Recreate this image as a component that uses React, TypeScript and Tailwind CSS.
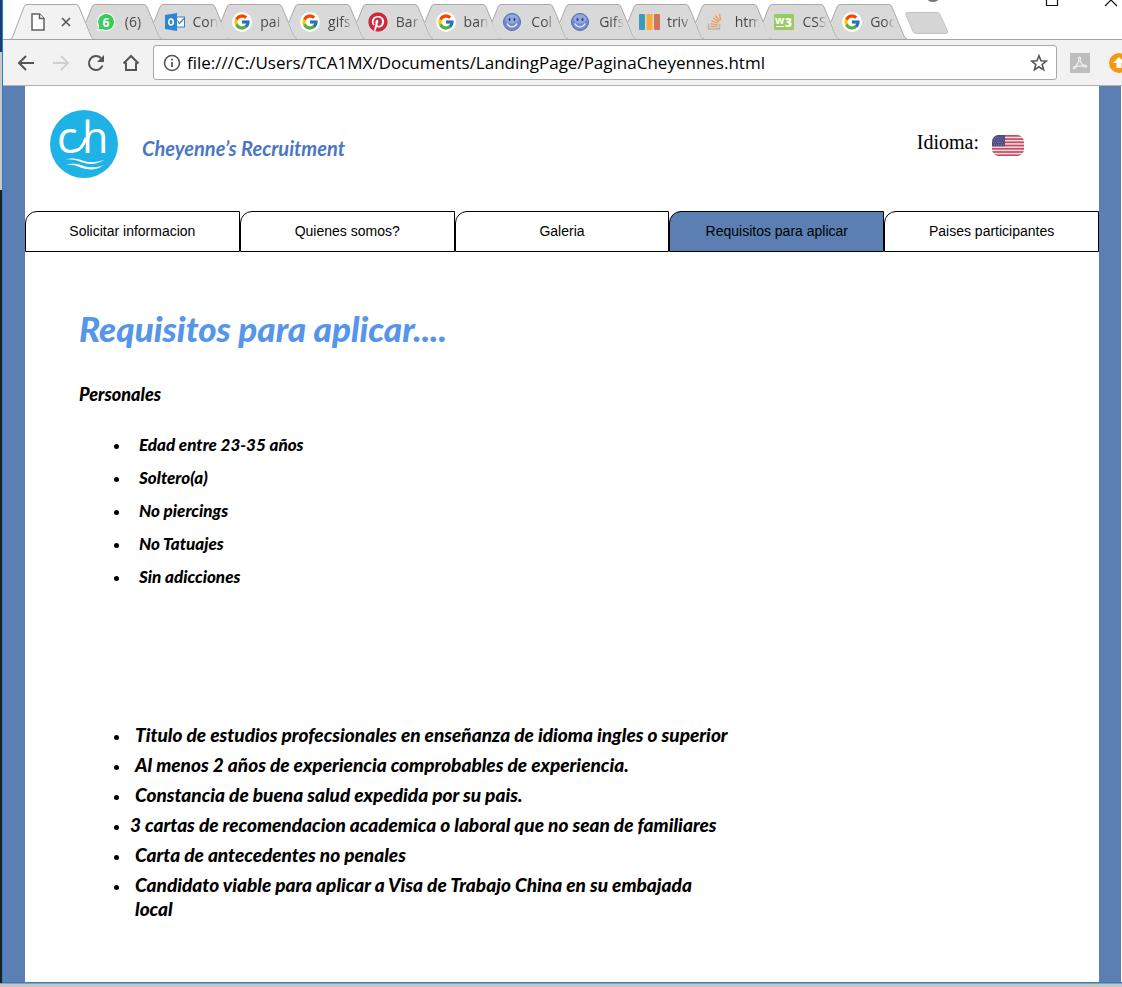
import React from "react";
import { FcGoogle } from "react-icons/fc";
import { FaPinterest } from "react-icons/fa";

const OUTLINE = "#a9a9a9";

function GoogleIcon() {
  return (
    <span className="flex size-5 items-center justify-center rounded-full bg-white">
      <FcGoogle className="size-[18px]" />
    </span>
  );
}

function WhatsAppIcon() {
  return (
    <svg viewBox="0 0 18 18" className="size-[18px]">
      <path d="M9 0a9 9 0 1 1-4 17L0 18l1.200-4.500A9 9 0 0 1 9 0Z" fill="#fff" />
      <path d="M9 1a8 8 0 1 1-3.800 15L1.400 16.600l.9-3.500A8 8 0 0 1 9 1Z" fill="#3acb5d" />
      <text x="9" y="13.500" textAnchor="middle" fontSize="12" fontWeight="700" fill="#fff" fontFamily="Open Sans, sans-serif">
        6
      </text>
    </svg>
  );
}

function OutlookIcon() {
  return (
    <svg viewBox="0 0 20 18" className="h-[18px] w-5">
      <rect x="9" y="4" width="10.500" height="10" fill="#fff" stroke="#2f86d0" />
      <path d="M10 5.500l4.500 4 5-4.500M13 9l1.500 2L19 6" fill="none" stroke="#2f86d0" />
      <path d="M0 2l12-2v18L0 16Z" fill="#2f86d0" />
      <ellipse cx="6" cy="9" rx="2.200" ry="3" fill="none" stroke="#fff" strokeWidth="1.600" />
    </svg>
  );
}

function PinterestIcon() {
  return (
    <span className="flex size-5 items-center justify-center rounded-full bg-white">
      <FaPinterest className="size-5 text-[#cb2a3c]" />
    </span>
  );
}

function SmileyIcon() {
  return (
    <svg viewBox="0 0 18 18" className="size-[18px]">
      <circle cx="9" cy="9" r="8.500" fill="#7289cf" stroke="#5a6ca8" />
      <ellipse cx="9" cy="6" rx="6.500" ry="4.500" fill="#93a8e2" />
      <ellipse cx="6.500" cy="6.500" rx="1" ry="1.700" fill="#34457c" />
      <ellipse cx="11.500" cy="6.500" rx="1" ry="1.700" fill="#34457c" />
      <path d="M4 10.500c2 4.500 8 4.500 10 0" fill="none" stroke="#e8eefc" strokeWidth="1.400" />
    </svg>
  );
}

function BarsIcon() {
  return (
    <svg viewBox="0 0 21 16" className="h-4 w-[21px]">
      <rect width="6" height="16" rx="1" fill="#389cba" />
      <rect x="7.500" width="6" height="16" fill="#fbab34" />
      <rect x="15" width="6" height="16" rx="1" fill="#d0735c" />
    </svg>
  );
}

function StackIcon() {
  return (
    <svg viewBox="0 0 16 17" className="h-[17px] w-4">
      <path d="M1.500 10.500v5.500h11v-5.500" fill="none" stroke="#b5b5b5" strokeWidth="1.500" />
      <path
        d="M3.500 13.500h7M3.700 10.800l7 .9M4.400 7.800l6.600 2.200M6 4.800l5.700 4M8.500 2.500l4.200 5.500M12.500 .8l1.200 6.500"
        stroke="#f49a56"
        strokeWidth="1.300"
      />
    </svg>
  );
}

function W3Icon() {
  return (
    <svg viewBox="0 0 20 16" className="h-4 w-5">
      <rect width="20" height="16" rx="1" fill="#98cc63" />
      <text x="1" y="10" fontSize="11" fontWeight="700" fill="#fff" fontFamily="Open Sans, sans-serif">w</text>
      <text x="11" y="12.500" fontSize="12" fontWeight="800" fill="#fff" fontFamily="Open Sans, sans-serif">3</text>
      <path d="M2 12.500h8" stroke="#fff" />
    </svg>
  );
}

const tabs = [
  { label: "(6)", icon: <WhatsAppIcon /> },
  { label: "Con", icon: <OutlookIcon /> },
  { label: "pai", icon: <GoogleIcon /> },
  { label: "gifs", icon: <GoogleIcon /> },
  { label: "Bar", icon: <PinterestIcon /> },
  { label: "ban", icon: <GoogleIcon /> },
  { label: "Col", icon: <SmileyIcon /> },
  { label: "Gifs", icon: <SmileyIcon /> },
  { label: "triv", icon: <BarsIcon /> },
  { label: "htm", icon: <StackIcon /> },
  { label: "CSS", icon: <W3Icon /> },
  { label: "Goo", icon: <GoogleIcon /> },
];

function TabStrip() {
  return (
    <div className="flex h-10 items-end overflow-hidden border-b border-[#a3a3a3] bg-white pl-[6px]">
      <ul className="flex w-[881px] shrink-0">
        <li className="relative h-[35px] min-w-0 flex-1">
          <svg viewBox="0 0 86 36" className="absolute top-0 left-0 z-10 h-9 w-[86px]">
            <path d="M0 36C3 35 3 34 4 32L15 3Q16 .5 18 .5H67Q69 .5 70 3L82 32Q83 35 86 36Z" fill="#f2f2f2" />
            <path d="M0 35.500C3 35 3 34 4 32L15 3Q16 .5 18 .5H67Q69 .5 70 3L82 32Q83 35 86 35.500" fill="none" stroke={OUTLINE} />
          </svg>
          <div className="relative z-20 flex h-full items-center gap-4 pl-[22px]">
            <svg viewBox="0 0 14 18" className="h-[18px] w-[14px] shrink-0" fill="#fff" stroke="#5f6063" strokeWidth="1.500">
              <path d="M1 1h7.500L13 5.500V17H1Z" />
              <path d="M8.500 1v4.500H13" />
            </svg>
            <button type="button" aria-label="Cerrar" className="flex size-[10px] shrink-0 items-center justify-center">
              <svg viewBox="0 0 10 10" className="size-[10px]" stroke="#5a5a5a" strokeWidth="1.700">
                <path d="M1 1l8 8M9 1L1 9" />
              </svg>
            </button>
          </div>
        </li>
        {tabs.map((t, i) => (
          <li key={i} className="relative h-[35px] min-w-0 flex-1">
            <svg viewBox="0 0 86 36" className="absolute top-0 left-0 h-9 w-[86px]">
              <path d="M9 18L15 3Q16 .5 18 .5H67Q69 .5 70 3L82 32Q83 34 85 35H18L14 32Z" fill="#d9d9d9" />
              <path d="M9 18L15 3Q16 .5 18 .5H67Q69 .5 70 3L82 32Q83 34 85 35" fill="none" stroke={OUTLINE} />
            </svg>
            <a href="#" className="relative flex h-full items-center pl-[20px]">
              <span className="flex w-7 shrink-0 items-center">{t.icon}</span>
              <span className="w-8 shrink-0 bg-linear-to-r from-[#444] from-[14px] to-[#d9d9d9] to-[25px] bg-clip-text text-[14px] leading-5 whitespace-nowrap text-transparent">
                {t.label}
              </span>
            </a>
          </li>
        ))}
      </ul>
      <button type="button" aria-label="Pestaña nueva" className="mr-[-30px] mb-[5px] ml-[15px] shrink-0">
        <svg viewBox="0 0 44 22" className="h-[22px] w-11">
          <path d="M2 .5H32Q34 .5 35 2.500L42.500 19Q43 21.500 41 21.500H12Q9 21.500 8 19.500L1 3Q0 .5 2 .5Z" fill="#d5d5d5" stroke="#c4c4c4" />
        </svg>
      </button>
      <svg viewBox="0 0 194 9" className="ml-auto h-[9px] w-[194px] shrink-0 self-start" fill="none" stroke="#111" strokeWidth="1.200">
        <ellipse cx="5" cy="-2" rx="6" ry="4" fill="#777" stroke="none" />
        <path d="M118.500-5V5.500H129.500V-5" />
        <path d="M177 6L189-6M189 6L177-6" />
      </svg>
    </div>
  );
}

const toolButton = "flex h-8 w-[35px] shrink-0 items-center justify-center";

function Toolbar() {
  return (
    <div className="flex h-[46px] items-center overflow-hidden border-b border-[#b0b0b0] bg-[#f2f2f2] pl-[5px]">
      <button type="button" aria-label="Atrás" className={toolButton}>
        <svg viewBox="0 0 18 16" className="h-4 w-[18px]" fill="none" stroke="#555" strokeWidth="2">
          <path d="M17 8H2M9 1L2 8l7 7" />
        </svg>
      </button>
      <button type="button" aria-label="Adelante" className={toolButton}>
        <svg viewBox="0 0 18 16" className="h-4 w-[18px]" fill="none" stroke="#d0d0d0" strokeWidth="2">
          <path d="M1 8h15M9 1l7 7-7 7" />
        </svg>
      </button>
      <button type="button" aria-label="Recargar" className={toolButton}>
        <svg viewBox="0 0 18 18" className="size-[18px]" fill="none" stroke="#555" strokeWidth="2">
          <path d="M15.500 11.500A7 7 0 1 1 14 4.200" />
          <path d="M17 1v7h-7Z" fill="#555" stroke="none" />
        </svg>
      </button>
      <button type="button" aria-label="Inicio" className={toolButton}>
        <svg viewBox="0 0 18 18" className="size-[18px]" fill="none" stroke="#555" strokeWidth="2">
          <path d="M1.500 9.500L9 2l7.500 7.500M4 8.500V16h10V8.500" />
        </svg>
      </button>
      <div className="ml-[5px] flex h-[35px] min-w-0 flex-1 items-center rounded-[3px] border border-[#a8a8a8] bg-white pr-2 pl-[9px]">
        <svg viewBox="0 0 18 18" className="size-[18px] shrink-0" fill="none" stroke="#555" strokeWidth="1.600">
          <circle cx="9" cy="9" r="7.500" />
          <path d="M9 8v5M9 4.800v1.800" strokeWidth="1.800" />
        </svg>
        <input
          type="text"
          aria-label="Dirección"
          defaultValue="file:///C:/Users/TCA1MX/Documents/LandingPage/PaginaCheyennes.html"
          className="ml-[6px] min-w-0 flex-1 bg-transparent text-[17px] leading-6 text-black outline-none"
        />
        <button type="button" aria-label="Favorito">
          <svg viewBox="0 0 18 18" className="size-[18px]" fill="none" stroke="#555" strokeWidth="1.600">
            <path d="M9 1.800l2 5 5.400.3-4.200 3.400 1.400 5.300L9 12.800l-4.600 3 1.400-5.300L1.600 7.100 7 6.800Z" />
          </svg>
        </button>
      </div>
      <div className="ml-[13px] flex w-[52px] shrink-0 items-center gap-[19px] overflow-hidden">
        <svg viewBox="0 0 20 20" className="size-5 shrink-0">
          <rect width="20" height="20" fill="#bebebe" />
          <path
            d="M9.500 4c1.500 0 1 3 .8 4 1 3 3.200 4.500 5.500 4.600 1.500.2 1.200 1.700-.3 1.500-2-.2-3-.9-4.500-1.300-2 0-3.500.5-5 1-1 1.700-2 2.500-2.600 1.900s.6-1.900 2.300-2.600C7.500 11 8.500 9 9 7.500c-.4-1.500-.4-3.200.5-3.500Z"
            fill="none"
            stroke="#f0f0f0"
            strokeWidth="1.200"
          />
        </svg>
        <svg viewBox="0 0 20 20" className="size-5 shrink-0">
          <circle cx="10" cy="10" r="10" fill="#f39a12" />
          <path d="M10 4l6 6h-3.500v5h-5v-5H4Z" fill="#fff" />
        </svg>
      </div>
    </div>
  );
}

function Logo() {
  return (
    <svg viewBox="0 0 68 68" role="img" aria-label="Cheyenne's Recruitment" className="size-[68px]">
      <circle cx="34" cy="34" r="34" fill="#1fb2e7" />
      <g fill="#fff" fontFamily="Open Sans, sans-serif" fontSize="43">
        <text x="7" y="43">c</text>
        <text x="32" y="43">h</text>
      </g>
      <path d="M25 41q7-1 11-13" fill="none" stroke="#fff" strokeWidth="3" />
      <path d="M15 49.500c12-3 17 2 24 2.500 6 .5 10-.5 15-2-6 4-12 4.500-18 3.500-7-1.500-11-5-21-4Z" fill="#fff" />
      <path d="M16 54.500c11-2.500 16 1.500 22 2.500 6 .8 11 0 16-2-6 4.500-12 5-18 4-7-1.500-11-5-20-4.500Z" fill="#fff" />
    </svg>
  );
}

function Flag() {
  return (
    <svg viewBox="0 0 32 21" className="h-[21px] w-8 overflow-hidden rounded-[7px]" aria-hidden="true">
      <rect width="32" height="21" fill="#f1dde0" />
      {[0, 1, 2, 3, 4, 5, 6].map((i) => (
        <rect key={i} y={i * 3.23} width="32" height="1.700" fill="#c64b60" />
      ))}
      <rect width="13" height="11.300" fill="#4d4c84" />
      <path d="M1 2.500h11M2 5h11M1 7.500h11M2 9.800h10" stroke="#9292b8" strokeWidth=".8" strokeDasharray="1 1.200" />
    </svg>
  );
}

const sections = [
  "Solicitar informacion",
  "Quienes somos?",
  "Galeria",
  "Requisitos para aplicar",
  "Paises participantes",
];

const personal = ["Edad entre 23-35 años", "Soltero(a)", "No piercings", "No Tatuajes", "Sin adicciones"];

const professional = [
  "Titulo de estudios profecsionales en enseñanza de idioma ingles o superior",
  "Al menos 2 años de experiencia comprobables de experiencia.",
  "Constancia de buena salud expedida por su pais.",
  "3 cartas de recomendacion academica o laboral que no sean de familiares",
  "Carta de antecedentes no penales",
  "Candidato viable para aplicar a Visa de Trabajo China en su embajada local",
];

function Page() {
  return (
    <div className="flex-1 border-x-[22px] border-[#5b7fb2] bg-white font-['Liberation_Serif',serif] text-black">
      <header className="flex items-start justify-between pt-6 pr-[75px] pb-[33px] pl-[25px]">
        <div className="flex items-center gap-6">
          <Logo />
          <p className="pt-2 font-['Lato',sans-serif] text-[20px] leading-6 font-bold text-[#4a76c6] italic">
            Cheyenne’s Recruitment
          </p>
        </div>
        <div className="flex items-start gap-[13px] pt-5">
          <span className="text-[20px] leading-6">Idioma:</span>
          <a href="#" aria-label="English" className="pt-[5px]">
            <Flag />
          </a>
        </div>
      </header>

      <nav className="grid grid-cols-5 font-['Liberation_Sans',sans-serif] text-[14px] leading-5">
        {sections.map((s) => (
          <a
            key={s}
            href="#"
            className={
              s === "Requisitos para aplicar"
                ? "rounded-tl-xl border border-black bg-[#5b7fb2] pt-[9px] pb-[10px] text-center"
                : "rounded-tl-xl border border-black bg-white pt-[9px] pb-[10px] text-center"
            }
          >
            {s}
          </a>
        ))}
      </nav>

      <main className="px-[54px] pt-14 pb-10 font-['Lato',sans-serif] italic">
        <h1 className="text-[35px] leading-10 font-black text-[#5595ea]">Requisitos para aplicar....</h1>
        <h2 className="mt-[34px] text-[18px] leading-6 font-black">Personales</h2>
        <ul className="mt-[27px] list-disc space-y-[9px] pl-[51px] text-[17px] leading-6 font-black marker:text-[14px]">
          {personal.map((p) => (
            <li key={p} className="pl-[9px]">
              {p}
            </li>
          ))}
        </ul>
        <ul className="mt-[134px] max-w-[651px] list-disc space-y-[6px] pl-[51px] text-[19px] leading-6 font-black marker:text-[14px]">
          {professional.map((p) => (
            <li key={p} className={p.startsWith("3") ? "pl-0" : "pl-[5px]"}>
              {p}
            </li>
          ))}
        </ul>
      </main>
    </div>
  );
}

export default function App() {
  return (
    <div className="flex min-h-screen flex-col bg-[#c6c6c6] font-['Open_Sans',sans-serif]">
      <div className="flex flex-1">
        <div className="flex w-[2px] shrink-0 flex-col">
          <div className="h-[52px] bg-[#1d3c70]" />
          <div className="h-[138px] bg-[#c9c9c9]" />
          <div className="flex-1 bg-[#1c1f24]" />
        </div>
        <div className="flex min-w-0 flex-1 flex-col border-b border-l border-[#1883d7]">
          <TabStrip />
          <Toolbar />
          <div className="flex flex-1 border-r border-white">
            <Page />
          </div>
        </div>
      </div>
      <div className="h-1 border-t border-[#999]" />
    </div>
  );
}
